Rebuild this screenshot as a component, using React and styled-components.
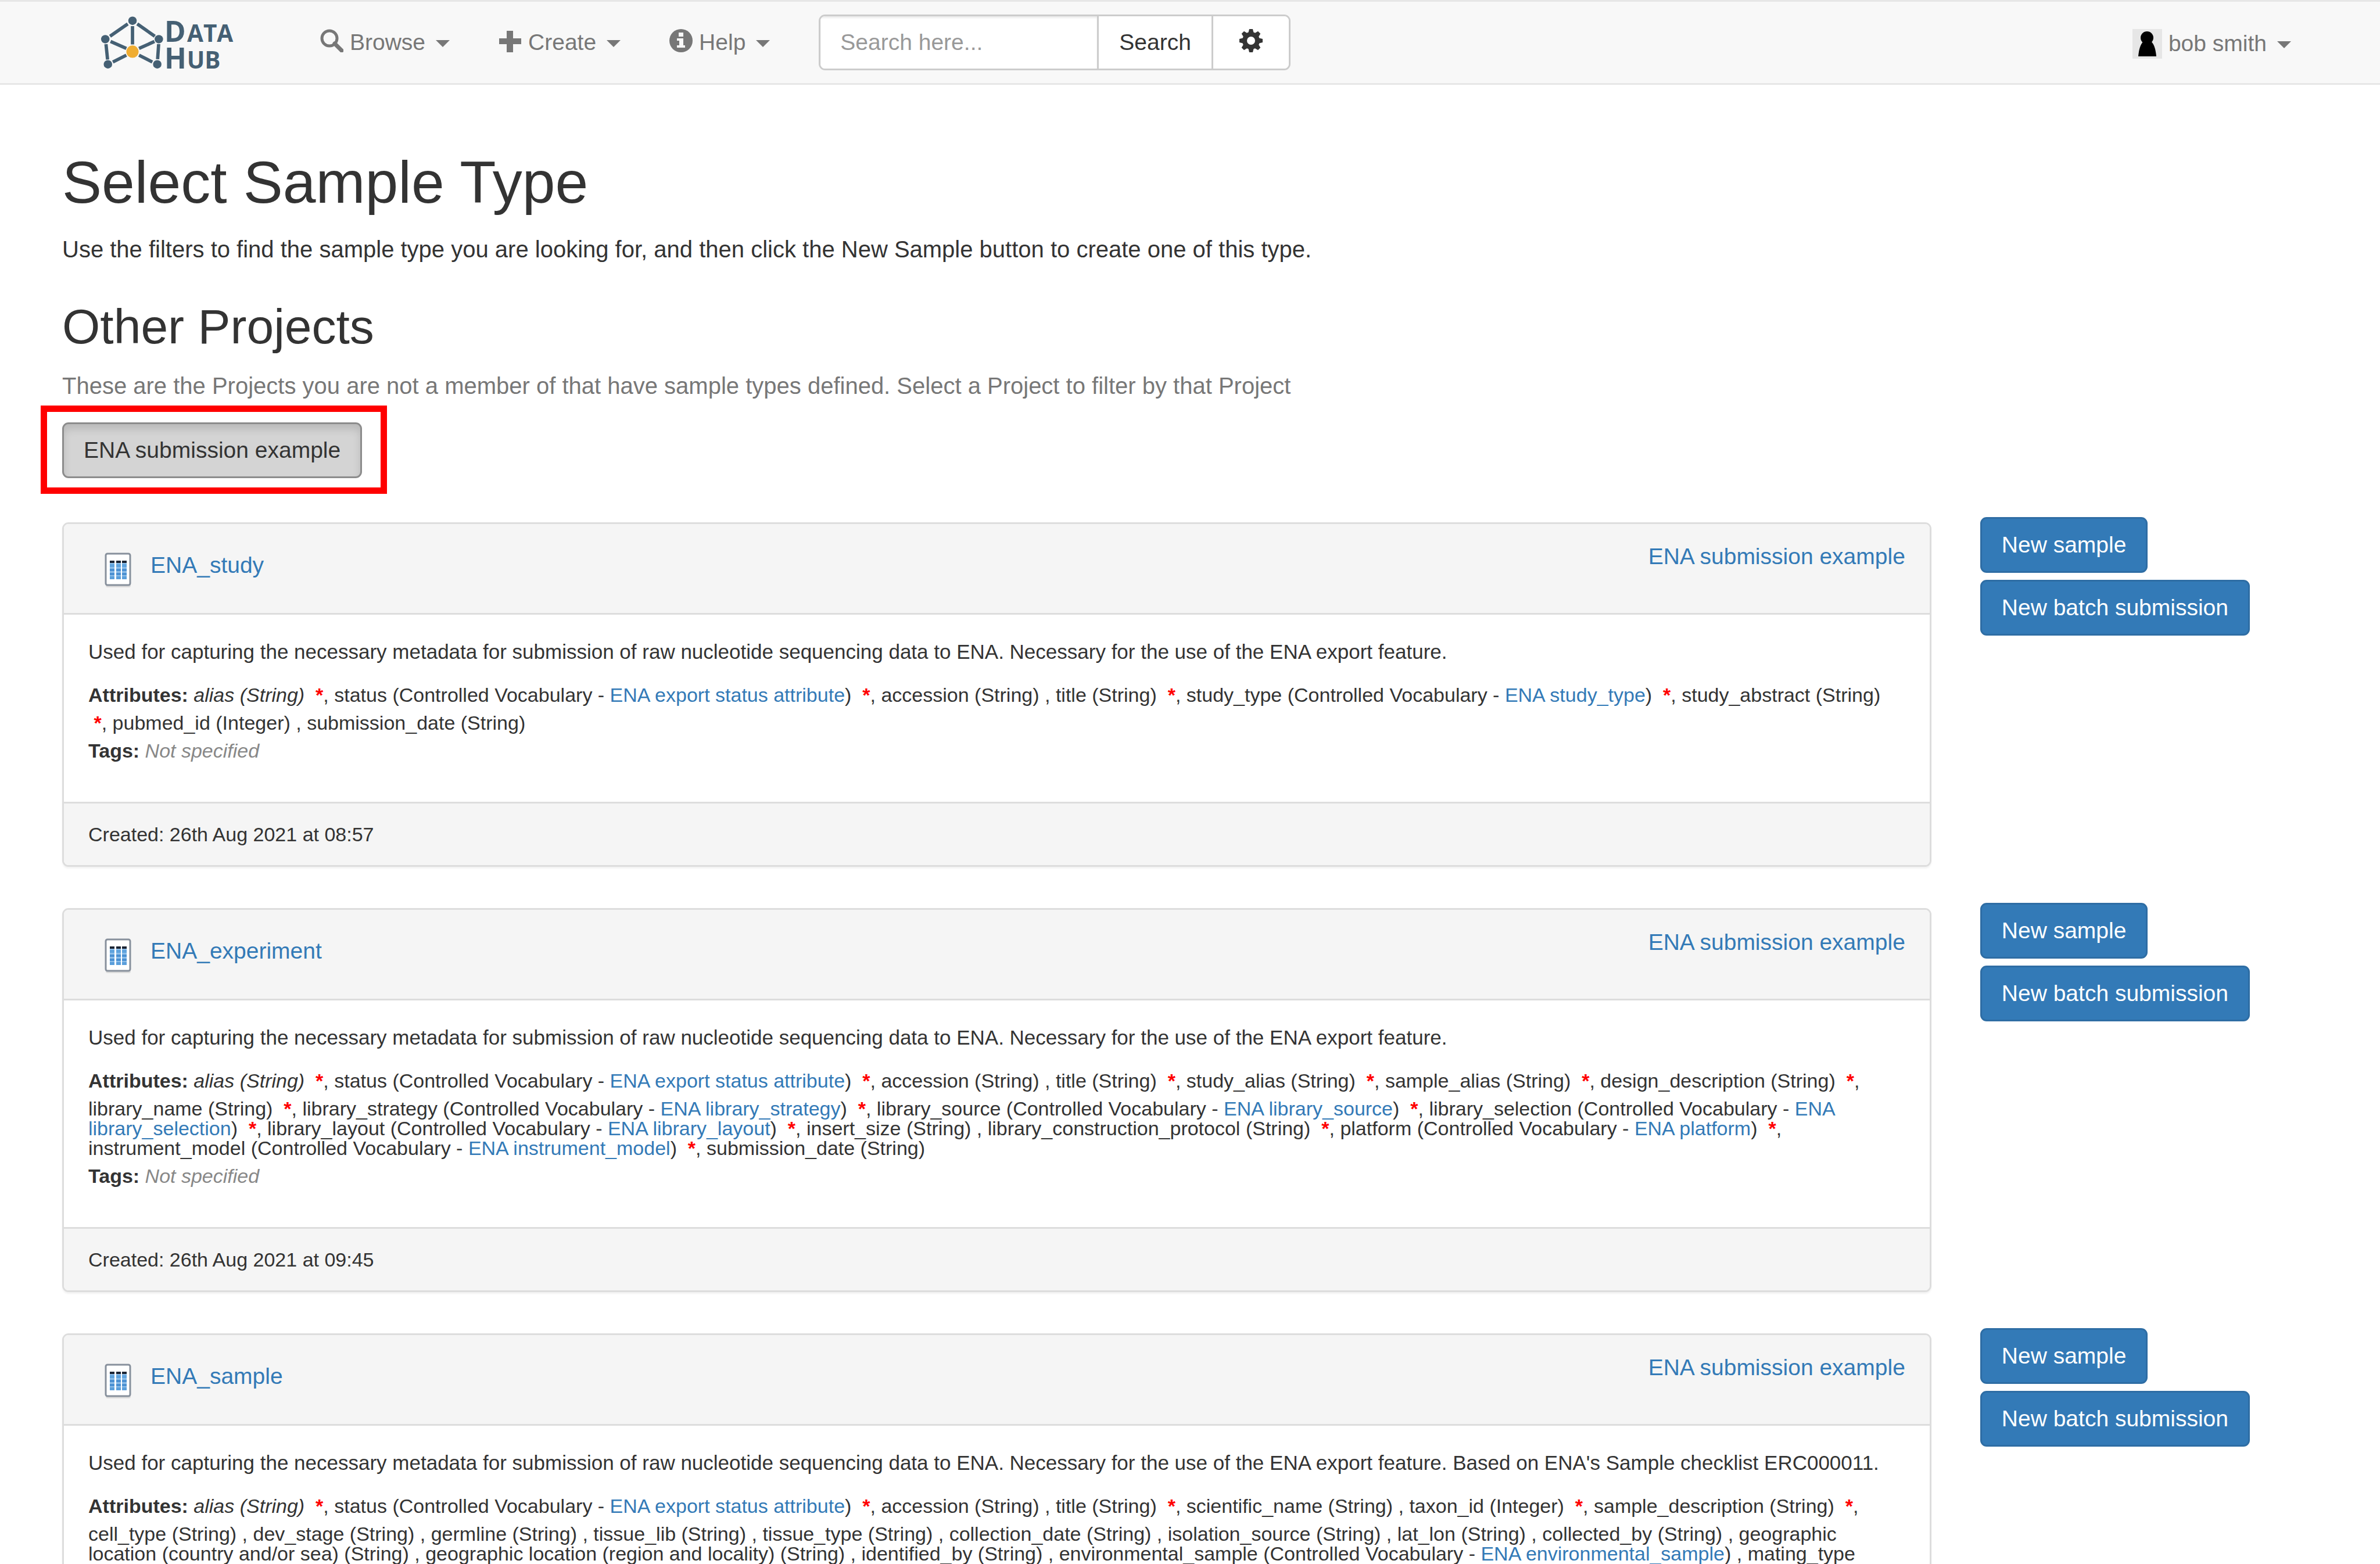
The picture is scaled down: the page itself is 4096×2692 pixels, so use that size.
import React from "react";
import styled, { createGlobalStyle } from "styled-components";

const GlobalStyle = createGlobalStyle`
  * { box-sizing: border-box; }
  body {
    margin: 0;
    background: #fff;
    color: #333;
    font-family: "Liberation Sans", Arial, Helvetica, sans-serif;
    font-size: 39px;
    line-height: 56px;
  }
  button, input { font: inherit; color: inherit; }
  a { color: #337ab7; text-decoration: none; }
`;

const Page = styled.div`
  height: 100vh;
  overflow: hidden;
`;

/* ---------- Navigation bar ---------- */

const Navbar = styled.nav`
  display: flex;
  align-items: center;
  height: 146px;
  padding: 0 111px 0 172px;
  background: #f8f8f8;
  border: solid #e7e7e7;
  border-width: 3px 0;
`;

const Brand = styled.a`
  display: flex;
  margin-right: 95px;
`;

const LogoText = styled.text`
  fill: #456074;
  font-family: "Open Sans", sans-serif;
  font-weight: 700;
  font-kerning: none;
  font-size: ${(p) => (p.$small ? 134 : 164)}px;
`;

const NavItem = styled.button`
  display: flex;
  align-items: center;
  gap: 11px;
  padding: ${(p) => (p.$user ? "4px 42px 0" : "0 42px")};
  margin-left: ${(p) => (p.$user ? "auto" : "0")};
  border: 0;
  background: none;
  color: #777;
`;

const Glyph = styled.svg`
  display: block;
  width: 40px;
  height: 40px;
  margin-bottom: 6px;
  fill: currentColor;
  stroke: none;
`;

const Caret = styled.span`
  margin: 4px 0 0 7px;
  border: 12px solid transparent;
  border-top-color: #777;
  border-bottom: 0;
`;

const SearchForm = styled.form`
  display: flex;
  height: 96px;
  margin-left: 42px;
  border: 3px solid #ccc;
  border-radius: 11px;
  background: #fff;
  overflow: hidden;
`;

const SearchInput = styled.input`
  width: 476px;
  padding: 0 34px;
  border: 0;
  outline: 0;
  background: #fff;
  box-shadow: inset 0 3px 3px rgba(0, 0, 0, 0.075);
  &::placeholder { color: #999; opacity: 1; }
`;

const SearchButton = styled.button`
  display: flex;
  align-items: center;
  justify-content: center;
  padding: 0 35px;
  min-width: 133px;
  border: 0;
  border-left: 3px solid #ccc;
  background: #fff;
`;

const Avatar = styled.svg`
  display: block;
  width: 51px;
  height: 51px;
`;

/* ---------- Page content ---------- */

const Main = styled.main`
  padding: 113px 70px 0 65px;
`;

const Intro = styled.header`
  padding: 0 42px;
`;

const Title = styled.h1`
  margin: 0 0 31px;
  font-size: 102px;
  line-height: 111px;
  font-weight: 400;
`;

const Subtitle = styled.h2`
  margin: 0 0 28px;
  font-size: 84px;
  line-height: 92px;
  font-weight: 400;
`;

const Lead = styled.p`
  margin: 0 0 59px;
  font-size: 40px;
`;

const Hint = styled.p`
  margin: 0 0 35px;
  font-size: 40px;
  color: #777;
`;

const Highlight = styled.div`
  position: relative;
  display: inline-flex;
  vertical-align: top;
  &::after {
    content: "";
    position: absolute;
    inset: -29px -43px -27px -37px;
    border: 11px solid #f00;
    pointer-events: none;
  }
`;

const Button = styled.button`
  height: 96px;
  padding: 0 34px;
  border: 3px solid ${(p) => (p.$primary ? "#2e6da4" : "#8c8c8c")};
  border-radius: 11px;
  background: ${(p) => (p.$primary ? "#337ab7" : "#d4d4d4")};
  color: ${(p) => (p.$primary ? "#fff" : "#333")};
  box-shadow: ${(p) => (p.$primary ? "none" : "inset 0 9px 14px rgba(0, 0, 0, 0.125)")};
  white-space: nowrap;
`;

const List = styled.div`
  display: grid;
  gap: 62px;
  margin-top: 67px;
`;

const Row = styled.section`
  display: grid;
  grid-template-columns: 5fr 1fr;
  align-items: start;
`;

const PanelCell = styled.div`
  padding: 9px 42px 0;
`;

const Actions = styled.div`
  display: flex;
  flex-direction: column;
  align-items: flex-start;
  gap: 12px;
  padding: 0 42px;
`;

const Panel = styled.article`
  border: 3px solid #ddd;
  border-radius: 11px;
  background: #fff;
  box-shadow: 0 3px 3px rgba(0, 0, 0, 0.05);
  overflow: hidden;
`;

const PanelHeading = styled.div`
  display: flex;
  justify-content: space-between;
  align-items: flex-start;
  padding: 28px 42px;
  border-bottom: 3px solid #ddd;
  background: #f5f5f5;
`;

const TypeTitle = styled.div`
  display: flex;
  gap: 22px;
  padding: 15px 0 14px 17px;
`;

const TypeIcon = styled.svg`
  display: block;
  width: 68px;
  height: 68px;
`;

const PanelBody = styled.div`
  padding: 40px 42px 57px;
  font-size: 34px;
  line-height: 48px;
`;

const Description = styled.p`
  margin: 0 0 19px;
  font-size: 35px;
`;

const Attributes = styled.div`
  padding-right: 12px;
  line-height: 34px;
  &::first-line { line-height: 62px; }
`;

const Tags = styled.div`
  line-height: 62px;
`;

const Required = styled.span`
  color: #f00;
`;

const None = styled.em`
  color: #888;
`;

const PanelFooter = styled.div`
  padding: 29px 42px;
  border-top: 3px solid #ddd;
  background: #f5f5f5;
  font-size: 34px;
  line-height: 48px;
`;

/* ---------- Drawings ---------- */

const Logo = () => (
  <svg width="242" height="139" viewBox="90 10 800 460" role="img" aria-label="Data Hub">
    <g stroke="#456074" strokeWidth="19">
      <path d="M248 133 147 203M302 133 402 203M275 146V250M150 233 240 273M400 233 312 273M124 248 133 336M424 248 418 334M163 350 240 311M388 350 312 311" />
    </g>
    <g fill="#456074">
      <circle cx="275" cy="115" r="24" />
      <circle cx="120" cy="220" r="24" />
      <circle cx="425" cy="220" r="24" />
      <circle cx="135" cy="363" r="24" />
      <circle cx="416" cy="363" r="24" />
    </g>
    <circle cx="275" cy="291" r="35" fill="#f0ad32" />
    <LogoText x="457" y="234">D</LogoText>
    <LogoText x="586" y="234" $small>ATA</LogoText>
    <LogoText x="457" y="387">H</LogoText>
    <LogoText x="585" y="387" $small>UB</LogoText>
  </svg>
);

const SearchGlyph = () => (
  <Glyph viewBox="0 0 40 40" aria-hidden="true">
    <circle cx="16" cy="16" r="13" fill="none" stroke="currentColor" strokeWidth="5" />
    <path d="M25 25 37 37" stroke="currentColor" strokeWidth="7" strokeLinecap="round" />
  </Glyph>
);

const PlusGlyph = () => (
  <Glyph viewBox="0 0 40 40" aria-hidden="true">
    <path d="M14 3h11v13h14v10H25v14H14V26H1V16h13z" />
  </Glyph>
);

const InfoGlyph = () => (
  <Glyph viewBox="0 0 40 40" aria-hidden="true">
    <circle cx="20" cy="20" r="20" />
    <path d="M16 6h8v7h-8zM13 16h11v12h3v4H13v-4h4v-8h-4z" fill="#f8f8f8" />
  </Glyph>
);

const CogGlyph = () => (
  <Glyph viewBox="0 0 40 40" aria-hidden="true">
    <circle cx="20" cy="20" r="11" fill="none" stroke="currentColor" strokeWidth="8" />
    {[0, 45, 90, 135, 180, 225, 270, 315].map((angle) => (
      <path key={angle} d="M17 0h6l2 8H15z" transform={`rotate(${angle} 20 20)`} />
    ))}
  </Glyph>
);

const SampleTypeIcon = () => (
  <TypeIcon viewBox="0 0 68 68" aria-hidden="true">
    <rect x="13" y="9" width="43" height="57" rx="3" fill="#ddd" />
    <rect x="13" y="8" width="42" height="54" rx="3" fill="#fff" stroke="#87909c" strokeWidth="3" />
    {[20, 31, 41].map((x) => (
      <g key={x}>
        <rect x={x} y="23" width="8" height="28" fill="#8fbfea" />
        <rect x={x} y="20" width="8" height="4" fill="#1b2433" />
        <rect x={x} y="26" width="8" height="5" fill="#5fa3dd" />
        <rect x={x} y="34" width="8" height="4" fill="#4a90d2" />
        <rect x={x} y="41" width="8" height="4" fill="#4a90d2" />
        <rect x={x} y="47" width="8" height="5" fill="#5b9fdb" />
      </g>
    ))}
  </TypeIcon>
);

/* ---------- Data ---------- */

const S = (name, required) => ({ name, type: "String", required });
const I = (name, required) => ({ name, type: "Integer", required });
const CV = (name, vocabulary, required) => ({ name, vocabulary, required });

const BASE =
  "Used for capturing the necessary metadata for submission of raw nucleotide sequencing data to ENA. Necessary for the use of the ENA export feature.";

const COMMON = [
  { name: "alias", type: "String", required: true, title: true },
  CV("status", "ENA export status attribute", true),
  S("accession"),
  S("title", true),
];

const TYPES = [
  {
    name: "ENA_study",
    description: BASE,
    created: "26th Aug 2021 at 08:57",
    attributes: [
      ...COMMON,
      CV("study_type", "ENA study_type", true),
      S("study_abstract", true),
      I("pubmed_id"),
      S("submission_date"),
    ],
  },
  {
    name: "ENA_experiment",
    description: BASE,
    created: "26th Aug 2021 at 09:45",
    attributes: [
      ...COMMON,
      S("study_alias", true),
      S("sample_alias", true),
      S("design_description", true),
      S("library_name", true),
      CV("library_strategy", "ENA library_strategy", true),
      CV("library_source", "ENA library_source", true),
      CV("library_selection", "ENA library_selection", true),
      CV("library_layout", "ENA library_layout", true),
      S("insert_size"),
      S("library_construction_protocol", true),
      CV("platform", "ENA platform", true),
      CV("instrument_model", "ENA instrument_model", true),
      S("submission_date"),
    ],
  },
  {
    name: "ENA_sample",
    description: BASE + " Based on ENA's Sample checklist ERC000011.",
    attributes: [
      ...COMMON,
      S("scientific_name"),
      I("taxon_id", true),
      S("sample_description", true),
      S("cell_type"),
      S("dev_stage"),
      S("germline"),
      S("tissue_lib"),
      S("tissue_type"),
      S("collection_date"),
      S("isolation_source"),
      S("lat_lon"),
      S("collected_by"),
      S("geographic location (country and/or sea)"),
      S("geographic location (region and locality)"),
      S("identified_by"),
      CV("environmental_sample", "ENA environmental_sample"),
      { name: "mating_type" },
    ],
  },
];

/* ---------- Components ---------- */

const Attribute = ({ item, last }) => {
  const Name = item.title ? "em" : "span";
  return (
    <>
      <Name>
        {item.name}
        {item.vocabulary && (
          <>
            {" (Controlled Vocabulary - "}
            <a href="#vocabulary">{item.vocabulary}</a>)
          </>
        )}
        {item.type && ` (${item.type})`}
      </Name>
      {!last && " "}
      {item.required && <Required>{"\u00a0"}<b>*</b></Required>}
      {!last && ", "}
    </>
  );
};

const SampleType = ({ type }) => (
  <Row>
    <PanelCell>
      <Panel>
        <PanelHeading>
          <TypeTitle>
            <SampleTypeIcon />
            <a href="#type">{type.name}</a>
          </TypeTitle>
          <a href="#project">ENA submission example</a>
        </PanelHeading>
        <PanelBody>
          <Description>{type.description}</Description>
          <Attributes>
            <b>Attributes:</b>{" "}
            {type.attributes.map((item, i) => (
              <Attribute key={item.name} item={item} last={i === type.attributes.length - 1} />
            ))}
          </Attributes>
          {type.created && (
            <Tags>
              <b>Tags:</b> <None>Not specified</None>
            </Tags>
          )}
        </PanelBody>
        {type.created && <PanelFooter>Created: {type.created}</PanelFooter>}
      </Panel>
    </PanelCell>
    <Actions>
      <Button $primary>New sample</Button>
      <Button $primary>New batch submission</Button>
    </Actions>
  </Row>
);

export default function App() {
  return (
    <Page>
      <GlobalStyle />
      <Navbar>
        <Brand href="#home"><Logo /></Brand>
        <NavItem type="button"><SearchGlyph />Browse<Caret /></NavItem>
        <NavItem type="button"><PlusGlyph />Create<Caret /></NavItem>
        <NavItem type="button"><InfoGlyph />Help<Caret /></NavItem>
        <SearchForm onSubmit={(e) => e.preventDefault()}>
          <SearchInput type="text" placeholder="Search here..." aria-label="Search" />
          <SearchButton type="submit">Search</SearchButton>
          <SearchButton type="button" aria-label="Search settings"><CogGlyph /></SearchButton>
        </SearchForm>
        <NavItem type="button" $user>
          <Avatar viewBox="0 0 51 51" aria-hidden="true">
            <rect width="51" height="51" fill="#e6e6e6" />
            <circle cx="25" cy="15" r="11" />
            <path d="M19 21h13c6 6 8 15 9 26H10c1-11 3-20 9-26z" />
          </Avatar>
          bob smith
          <Caret />
        </NavItem>
      </Navbar>
      <Main>
        <Intro>
          <Title>Select Sample Type</Title>
          <Lead>
            Use the filters to find the sample type you are looking for, and then click the New
            Sample button to create one of this type.
          </Lead>
          <Subtitle>Other Projects</Subtitle>
          <Hint>
            These are the Projects you are not a member of that have sample types defined. Select a
            Project to filter by that Project
          </Hint>
          <Highlight>
            <Button type="button" aria-pressed="true">ENA submission example</Button>
          </Highlight>
        </Intro>
        <List>
          {TYPES.map((type) => (
            <SampleType key={type.name} type={type} />
          ))}
        </List>
      </Main>
    </Page>
  );
}
